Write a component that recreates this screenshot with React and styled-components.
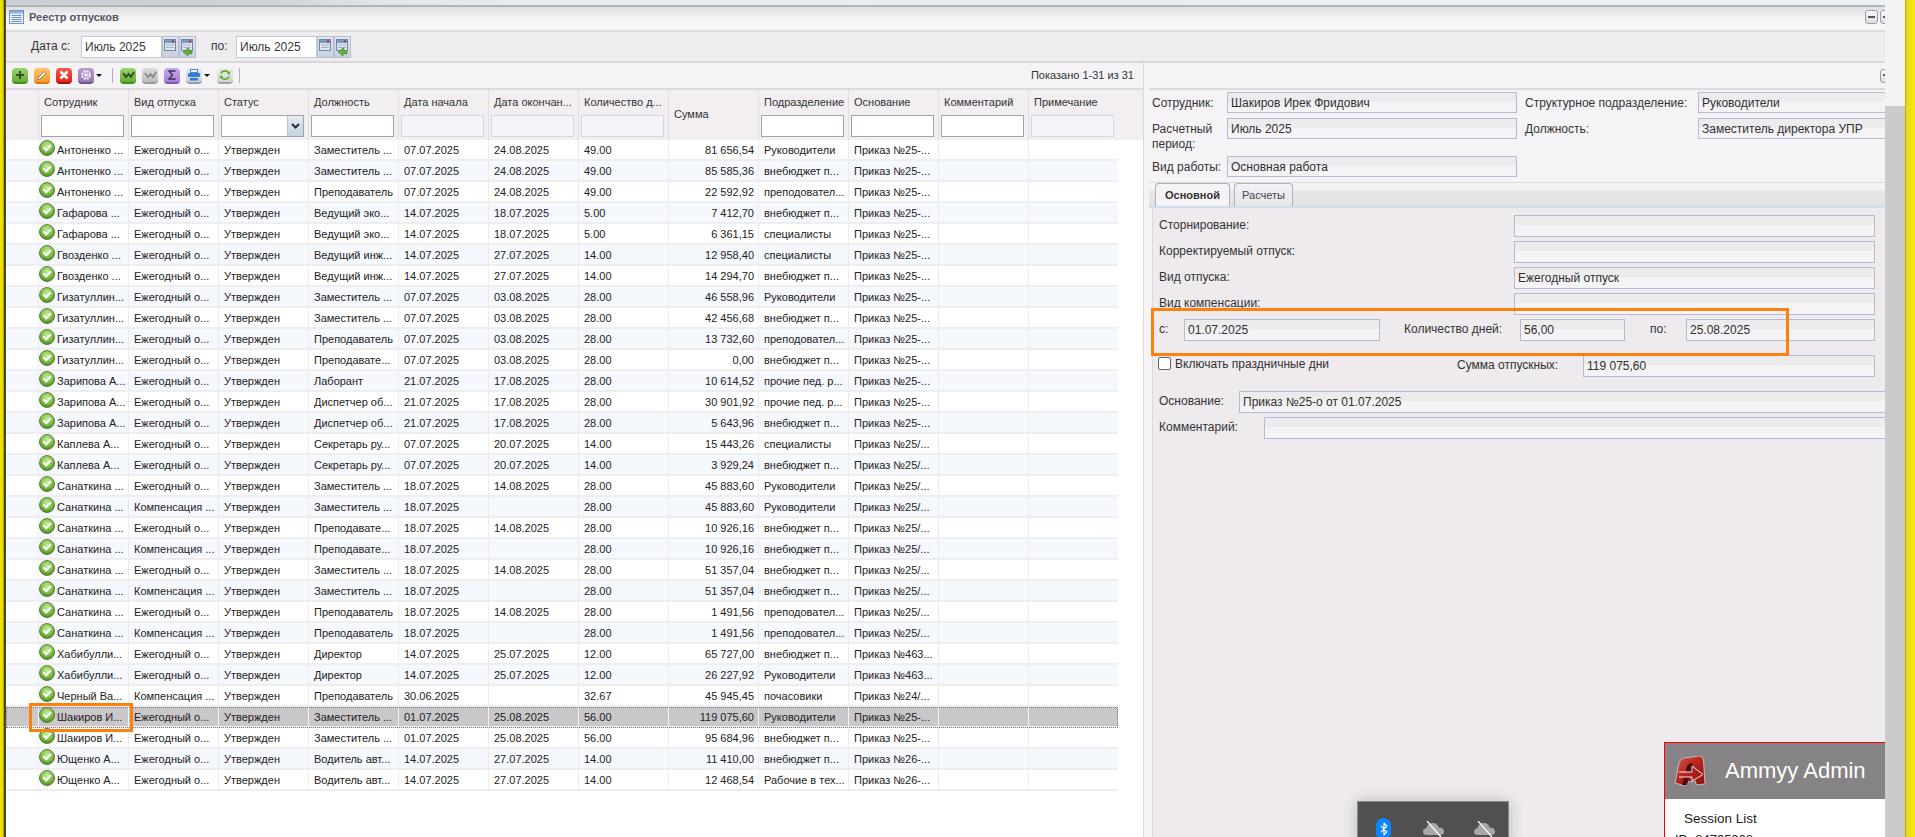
import React from "react";
import styled, { createGlobalStyle } from "styled-components";
import { Bluetooth } from "lucide-react";

const GlobalStyle = createGlobalStyle`
  html, body {
    margin: 0;
    padding: 0;
    height: 837px;
    overflow: hidden;
    background: #fff;
  }
  * { box-sizing: border-box; }
  body {
    font-family: "Liberation Sans", Arial, sans-serif;
    font-size: 11px;
    color: #222;
  }
`;

const Z = "Заместитель ...";
const P = "Преподаватель";
const PT = "Преподавате...";
const VB = "внебюджет п...";
const RK = "Руководители";
const SP = "специалисты";
const PR = "преподовател...";
const PED = "прочие пед. р...";
const E = "Ежегодный о...";
const K = "Компенсация ...";
const N25 = "Приказ №25-...";
const N25S = "Приказ №25/...";
const N463 = "Приказ №463...";
const N26 = "Приказ №26-...";

const rows = [
  ["Антоненко ...", E, Z, "07.07.2025", "24.08.2025", "49.00", "81 656,54", RK, N25],
  ["Антоненко ...", E, Z, "07.07.2025", "24.08.2025", "49.00", "85 585,36", VB, N25],
  ["Антоненко ...", E, P, "07.07.2025", "24.08.2025", "49.00", "22 592,92", PR, N25],
  ["Гафарова ...", E, "Ведущий эко...", "14.07.2025", "18.07.2025", "5.00", "7 412,70", VB, N25],
  ["Гафарова ...", E, "Ведущий эко...", "14.07.2025", "18.07.2025", "5.00", "6 361,15", SP, N25],
  ["Гвозденко ...", E, "Ведущий инж...", "14.07.2025", "27.07.2025", "14.00", "12 958,40", SP, N25],
  ["Гвозденко ...", E, "Ведущий инж...", "14.07.2025", "27.07.2025", "14.00", "14 294,70", VB, N25],
  ["Гизатуллин...", E, Z, "07.07.2025", "03.08.2025", "28.00", "46 558,96", RK, N25],
  ["Гизатуллин...", E, Z, "07.07.2025", "03.08.2025", "28.00", "42 456,68", VB, N25],
  ["Гизатуллин...", E, P, "07.07.2025", "03.08.2025", "28.00", "13 732,60", PR, N25],
  ["Гизатуллин...", E, PT, "07.07.2025", "03.08.2025", "28.00", "0,00", VB, N25],
  ["Зарипова А...", E, "Лаборант", "21.07.2025", "17.08.2025", "28.00", "10 614,52", PED, N25],
  ["Зарипова А...", E, "Диспетчер об...", "21.07.2025", "17.08.2025", "28.00", "30 901,92", PED, N25],
  ["Зарипова А...", E, "Диспетчер об...", "21.07.2025", "17.08.2025", "28.00", "5 643,96", VB, N25],
  ["Каплева А...", E, "Секретарь ру...", "07.07.2025", "20.07.2025", "14.00", "15 443,26", SP, N25S],
  ["Каплева А...", E, "Секретарь ру...", "07.07.2025", "20.07.2025", "14.00", "3 929,24", VB, N25S],
  ["Санаткина ...", E, Z, "18.07.2025", "14.08.2025", "28.00", "45 883,60", RK, N25S],
  ["Санаткина ...", K, Z, "18.07.2025", "", "28.00", "45 883,60", RK, N25S],
  ["Санаткина ...", E, PT, "18.07.2025", "14.08.2025", "28.00", "10 926,16", VB, N25S],
  ["Санаткина ...", K, PT, "18.07.2025", "", "28.00", "10 926,16", VB, N25S],
  ["Санаткина ...", E, Z, "18.07.2025", "14.08.2025", "28.00", "51 357,04", VB, N25S],
  ["Санаткина ...", K, Z, "18.07.2025", "", "28.00", "51 357,04", VB, N25S],
  ["Санаткина ...", E, P, "18.07.2025", "14.08.2025", "28.00", "1 491,56", PR, N25S],
  ["Санаткина ...", K, P, "18.07.2025", "", "28.00", "1 491,56", PR, N25S],
  ["Хабибулли...", E, "Директор", "14.07.2025", "25.07.2025", "12.00", "65 727,00", VB, N463],
  ["Хабибулли...", E, "Директор", "14.07.2025", "25.07.2025", "12.00", "26 227,92", RK, N463],
  ["Черный Ва...", K, P, "30.06.2025", "", "32.67", "45 945,45", "почасовики", "Приказ №24/..."],
  ["Шакиров И...", E, Z, "01.07.2025", "25.08.2025", "56.00", "119 075,60", RK, N25],
  ["Шакиров И...", E, Z, "01.07.2025", "25.08.2025", "56.00", "95 684,96", VB, N25],
  ["Ющенко А...", E, "Водитель авт...", "14.07.2025", "27.07.2025", "14.00", "11 410,00", VB, N26],
  ["Ющенко А...", E, "Водитель авт...", "14.07.2025", "27.07.2025", "14.00", "12 468,54", "Рабочие в тех...", N26],
];

const columns = [
  { title: "Сотрудник", filter: "on" },
  { title: "Вид отпуска", filter: "on" },
  { title: "Статус", filter: "select" },
  { title: "Должность", filter: "on" },
  { title: "Дата начала", filter: "off" },
  { title: "Дата окончан...", filter: "off" },
  { title: "Количество д...", filter: "off" },
  { title: "Сумма", filter: "none" },
  { title: "Подразделение", filter: "on" },
  { title: "Основание", filter: "on" },
  { title: "Комментарий", filter: "on" },
  { title: "Примечание", filter: "off" },
];

const Page = styled.div`
  position: relative;
  display: flex;
  width: 1915px;
  height: 837px;
  overflow: hidden;
`;

const EdgeLeft = styled.div`
  width: 6px;
  background: linear-gradient(90deg, #f0e400 0, #e8dc00 55%, #3a3a20 65%, #55554a 100%);
`;

const EdgeRight = styled.div`
  width: 10px;
  background: linear-gradient(90deg, #8d8a20 0, #e8dc10 12%, #f6ea1a 100%);
`;

const ScrollTrack = styled.div`
  width: 20px;
  background: #cbcbcb;
  &::before {
    content: "";
    display: block;
    height: 106px;
    background: #f3f3f3;
  }
`;

const Window = styled.div`
  width: 1879px;
  display: flex;
  flex-direction: column;
  overflow: hidden;
`;

const TopStrip = styled.div`
  height: 7px;
  flex: none;
  border-bottom: 2px solid #b3b3ba;
  background: linear-gradient(90deg, #c9ced4 0, #cfd3d8 14%, #e2e6ea 20%, #e8ecf2 30%, #eef2f8 100%);
`;

const TitleBar = styled.div`
  height: 25px;
  flex: none;
  display: flex;
  align-items: center;
  gap: 5px;
  padding: 0 0 3px 3px;
  background: linear-gradient(180deg, #dedede 0, #f1f1f1 40%, #f8f7f7 60%, #f8f7f7 100%);
  border-bottom: 2px solid #dcdcdc;
`;

const TitleText = styled.span`
  font-weight: bold;
  font-size: 11px;
  color: #565664;
`;

const PanelButtons = styled.div`
  margin-left: auto;
  display: flex;
  gap: 2px;
  margin-right: -8px;
`;

const SmallButton = styled.span`
  display: flex;
  align-items: center;
  justify-content: center;
  width: 13px;
  height: 14px;
  border: 1px solid #9b9ba6;
  border-radius: 3px;
  background: linear-gradient(180deg, #fbfbfb, #dcdce2);
  &::after {
    content: "";
    width: 7px;
    height: 2px;
    background: #555;
  }
`;

const FilterBar = styled.div`
  height: 31px;
  flex: none;
  display: flex;
  align-items: center;
  padding-left: 25px;
  background: #efecef;
  border-bottom: 2px solid #d9d7d9;
  font-size: 12px;
`;

const FilterLabel = styled.label`
  width: ${(p) => p.$w}px;
  flex: none;
  padding-bottom: 1px;
  color: #333;
`;

const MonthInput = styled.div`
  width: 81px;
  height: 22px;
  line-height: 21px;
  padding-left: 3px;
  background: #fff;
  border: 1px solid #c2c8d8;
  color: #3a3a3a;
`;

const TriggerButton = styled.span`
  width: 17px;
  height: 22px;
  display: flex;
  align-items: center;
  justify-content: center;
  background: linear-gradient(180deg, #e2e7f0, #c7d0de);
  border: 1px solid #b8c0d0;
  margin-right: ${(p) => p.$mr || 0}px;
`;

const Split = styled.div`
  flex: 1;
  display: flex;
  min-height: 0;
`;

const GridPanel = styled.section`
  width: 1137px;
  flex: none;
  display: flex;
  flex-direction: column;
  background: #fff;
`;

const Toolbar = styled.div`
  height: 27px;
  flex: none;
  display: flex;
  align-items: center;
  padding-left: 6px;
  background: #f6f3f7;
  border-bottom: 2px solid #dcd9dc;
`;

const ToolIcon = styled.span`
  width: 16px;
  height: 16px;
  flex: none;
  display: flex;
  align-items: center;
  justify-content: center;
  border-radius: 4px;
  margin-right: ${(p) => p.$mr ?? 6}px;
  background: linear-gradient(180deg, ${(p) => p.$top}, ${(p) => p.$bottom});
  border-bottom: 2px solid ${(p) => p.$edge};
`;

const Caret = styled.span`
  width: 0;
  height: 0;
  flex: none;
  margin: 0 ${(p) => p.$mr ?? 10}px 0 2px;
  border-left: 3px solid transparent;
  border-right: 3px solid transparent;
  border-top: 3px solid #111;
`;

const ToolSep = styled.span`
  width: 1px;
  height: 15px;
  flex: none;
  background: #aab4b8;
  margin-right: 7px;
`;

const ShownInfo = styled.span`
  margin-left: auto;
  margin-right: 9px;
  font-size: 11px;
  color: #333;
  padding-bottom: 2px;
`;

const GridHead = styled.div`
  height: 50px;
  flex: none;
  display: grid;
  grid-template-columns: 32px repeat(12, 90px);
  background: #f2eef2;
`;

const HeadCell = styled.div`
  position: relative;
  border-left: ${(p) => (p.$blank ? "none" : "1px solid #e2dee2")};
  padding: 6px 0 0 5px;
  color: #333;
  white-space: nowrap;
  ${(p) => p.$center && "display: flex; align-items: center; padding-top: 0; padding-bottom: 2px;"}
`;

const FilterBox = styled.div`
  position: relative;
  width: 83px;
  height: 22px;
  margin: 7px 0 0 -3px;
  background: ${(p) => (p.$off ? "#f4f5fb" : "#fff")};
  border: 1px solid ${(p) => (p.$off ? "#d4d6e0" : "#a3a3a8")};
`;

const SelectArrow = styled.span`
  position: absolute;
  right: 0;
  top: 0;
  bottom: 0;
  width: 16px;
  display: flex;
  align-items: center;
  justify-content: center;
  background: linear-gradient(180deg, #e4eaf0, #c3d2de);
  border-left: 1px solid #b8c4d0;
`;

const GridRow = styled.div`
  height: 21px;
  flex: none;
  width: 1112px;
  display: grid;
  grid-template-columns: 32px repeat(12, 90px);
  background: ${(p) => (p.$selected ? "#c9c7ca" : p.$alt ? "#f5f8fd" : "#fff")};
  border-bottom: 2px solid #eeeeee;
  ${(p) => p.$selected && "outline: 1px dotted #777; outline-offset: -1px;"}
`;

const Cell = styled.div`
  display: flex;
  align-items: center;
  justify-content: ${(p) => (p.$right ? "flex-end" : "flex-start")};
  padding: ${(p) => (p.$right ? "0 4px 0 0" : "0 0 0 5px")};
  border-left: 1px solid ${(p) => (p.$selected ? "#f2f2f2" : "#ececec")};
  white-space: nowrap;
  overflow: hidden;
`;

const NameCell = styled(Cell)`
  padding-left: 0;
  gap: 2px;
  overflow: visible;
`;

const BlankCell = styled.div``;

const Splitter = styled.div`
  width: 9px;
  flex: none;
  background: #f5f3f5;
  border-left: 1px solid #dcd8dc;
  border-right: 1px solid #dcd8dc;
`;

const DetailPanel = styled.section`
  flex: 1;
  min-width: 0;
  display: flex;
  flex-direction: column;
  overflow: hidden;
  background: #f6f3f7;
  margin-left: -3px;
  font-size: 12px;
`;

const DetailToolbar = styled.div`
  height: 27px;
  flex: none;
  display: flex;
  align-items: center;
  justify-content: flex-end;
  border-bottom: 2px solid #dcd9dc;
`;

const ClippedButton = styled(SmallButton)`
  margin-right: -8px;
  padding-bottom: 2px;
`;

const HeadForm = styled.div`
  flex: none;
  display: grid;
  grid-template-columns: 75px 290px 181px 200px;
  grid-template-rows: 21px 33px 21px;
  row-gap: 5px;
  padding: 2px 0 5px 3px;
`;

const HeadLabel = styled.div`
  line-height: 14.5px;
  padding-top: 4px;
  color: #333;
  margin-left: ${(p) => p.$ml || 0}px;
`;

const Field = styled.div`
  height: ${(p) => p.$h || 22}px;
  flex: ${(p) => (p.$w ? "none" : "1")};
  width: ${(p) => (p.$w ? `${p.$w}px` : "auto")};
  line-height: ${(p) => (p.$h || 22) - 1}px;
  padding-left: 3px;
  border: 1px solid #b3bcd4;
  white-space: nowrap;
  color: #2f2f2f;
  background: linear-gradient(180deg, #ececec 0, #ececec 45%, #f6f3f7 45%, #f6f3f7 100%);
`;

const TabStrip = styled.div`
  height: 26px;
  flex: none;
  display: flex;
  align-items: flex-end;
  gap: 4px;
  padding-left: 6px;
  border-top: 1px solid #dcdcdc;
  border-bottom: 2px solid #cfdcec;
  background: linear-gradient(180deg, #f5f3f5 0, #f5f3f5 30%, #e8e8e8 30%, #e2e2e2 100%);
`;

const Tab = styled.div`
  width: ${(p) => p.$w}px;
  height: 23px;
  display: flex;
  align-items: center;
  justify-content: center;
  border: 1px solid #aab0bc;
  border-bottom: none;
  border-radius: 4px 4px 0 0;
  font-size: 11px;
  font-weight: ${(p) => (p.$active ? "bold" : "normal")};
  color: ${(p) => (p.$active ? "#333" : "#445")};
  background: ${(p) => (p.$active ? "#f6f3f7" : "linear-gradient(180deg, #f4f2f4, #e6e6e6)")};
`;

const TabBody = styled.div`
  flex: 1;
  margin-left: 3px;
  padding: 7px 0 0 6px;
  background: #eeeaee;
  border-left: 1px solid #dcd8dc;
  overflow: hidden;
`;

const FormRow = styled.div`
  display: flex;
  align-items: flex-start;
  height: 22px;
  margin-bottom: ${(p) => p.$mb ?? 4}px;
  padding-right: 10px;
`;

const RowLabel = styled.div`
  width: ${(p) => p.$w}px;
  flex: none;
  line-height: 21px;
  white-space: nowrap;
  margin-left: ${(p) => p.$ml || 0}px;
  color: #333;
`;

const CheckLabel = styled.label`
  width: 299px;
  flex: none;
  display: flex;
  align-items: center;
  gap: 4px;
  height: 15px;
  margin-top: 1px;
  margin-left: -1px;
  color: #333;
`;

const CheckBox = styled.span`
  width: 13px;
  height: 13px;
  flex: none;
  border: 1px solid #666;
  border-radius: 2px;
  background: #fff;
`;

const Highlight = styled.div`
  position: absolute;
  left: ${(p) => p.$x}px;
  top: ${(p) => p.$y}px;
  width: ${(p) => p.$w}px;
  height: ${(p) => p.$h}px;
  border: 3px solid #ff7f0e;
  pointer-events: none;
`;

const TrayPopup = styled.div`
  position: absolute;
  left: 1357px;
  top: 801px;
  width: 152px;
  height: 46px;
  display: flex;
  align-items: flex-start;
  padding: 16px 0 0 18px;
  background: #505050;
  border: 1px solid #8c8c8c;
  box-shadow: 0 0 14px rgba(0, 0, 0, 0.22);
`;

const BluetoothPill = styled.span`
  width: 15px;
  height: 22px;
  flex: none;
  display: flex;
  align-items: center;
  justify-content: center;
  border-radius: 8px;
  background: #0a84ff;
  color: #fff;
  margin-right: 32px;
`;

const TrayCloud = styled.svg`
  width: 21px;
  height: 16px;
  flex: none;
  margin-top: 3px;
  margin-right: 30px;
`;

const AmmyyWindow = styled.div`
  position: absolute;
  left: 1664px;
  top: 742px;
  width: 221px;
  height: 95px;
  background: #fff;
  border-left: 1px solid #f00;
  border-top: 1px solid #f00;
  overflow: hidden;
`;

const AmmyyHead = styled.div`
  height: 56px;
  display: flex;
  align-items: center;
  gap: 19px;
  padding-left: 9px;
  background: #868386;
  color: #fff;
  font-size: 22px;
`;

const SessionTitle = styled.div`
  padding: 12px 0 0 19px;
  font-size: 13.5px;
  line-height: 16px;
  color: #222;
`;

const SessionId = styled.div`
  padding: 5px 0 0 10px;
  font-size: 13px;
  line-height: 15px;
  color: #222;
`;

const StatusSvg = styled.svg`
  flex: none;
  margin-top: -4px;
`;

const PlainSvg = styled.svg`
  flex: none;
`;

function StatusIcon() {
  return (
    <StatusSvg width="16" height="16" viewBox="0 0 16 16">
      <defs>
        <radialGradient id="okFill" cx="50%" cy="35%" r="65%">
          <stop offset="0" stopColor="#c8ec9a" />
          <stop offset="0.6" stopColor="#7fbf45" />
          <stop offset="1" stopColor="#4a8526" />
        </radialGradient>
      </defs>
      <circle cx="8" cy="8" r="7.5" fill="url(#okFill)" stroke="#55783f" strokeWidth="0.9" />
      <path d="M4.400 7.300 7.200 10.200 11.800 5.200" fill="none" stroke="#fff" strokeWidth="2.200" />
    </StatusSvg>
  );
}

function CalendarIcon({ back }) {
  return (
    <svg width="15" height="18" viewBox="0 0 15 18">
      <rect x="1.5" y="1.5" width="11" height="11" fill="#dfe6f2" stroke="#6e86a8" />
      <rect x="2" y="2" width="10" height="3" fill="#7f98bc" />
      <circle cx="10" cy="3.5" r="1.2" fill="#c0392b" />
      <path d="M3 7h8M3 9.5h8" stroke="#9fb2cc" />
      {back && <path d="M9 10v3h3v3H8v2L3 14l5-4z" fill="#6cae3a" stroke="#3f7f1a" strokeWidth="0.5" />}
    </svg>
  );
}

function Glyph({ children }) {
  return (
    <svg width="14" height="14" viewBox="0 0 14 14">
      {children}
    </svg>
  );
}

function TitleIcon() {
  return (
    <PlainSvg width="15" height="14" viewBox="0 0 15 14">
      <rect x="0.5" y="0.5" width="14" height="13" fill="#eaf1fb" stroke="#6e90c4" />
      <rect x="1" y="1" width="13" height="2.5" fill="#8fb2e2" />
      <path d="M2.5 5.5h10M2.5 7.5h10M2.5 9.5h10M2.5 11.5h10" stroke="#6f8fbd" />
    </PlainSvg>
  );
}

function AmmyyLogo() {
  return (
    <PlainSvg width="32" height="30" viewBox="0 0 32 30">
      <defs>
        <linearGradient id="ammyyRed" x1="0" y1="0" x2="1" y2="1">
          <stop offset="0" stopColor="#d0554c" />
          <stop offset="0.55" stopColor="#b3201b" />
          <stop offset="1" stopColor="#8a110e" />
        </linearGradient>
      </defs>
      <path
        d="M1 27 5 7Q6 3 10 2L25 0Q29 0 29.500 4L31 28 22 29 21.500 25 14 26 13 29 8 29Z"
        fill="url(#ammyyRed)"
        stroke="#c8b8b8"
      />
      <path d="M12 16Q12 8 17 7 19 7 19 10L19 16Z" fill="#4a0d0d" />
      <path d="M10 21 15 21 13 29 8 29Z" fill="#4a0d0d" />
      <path d="M5 16 18 16 18 10 29 18.500 18 25 18 21 5 21" fill="none" stroke="#f4e6e6" strokeWidth="1" />
    </PlainSvg>
  );
}

function CloudOff() {
  return (
    <TrayCloud viewBox="0 0 21 16">
      <path
        d="M4 14Q0 14 0 10.5 0 7.5 3.5 7 4.5 2 10 2 14.500 2 15.500 6.500 21 6.500 21 10.500 21 14 17 14Z"
        fill="#a8a8a8"
      />
      <path d="M4 0 18 16" stroke="#f4f4f4" strokeWidth="1.4" />
    </TrayCloud>
  );
}

function DataRow({ row, index }) {
  const selected = index === 27;
  const cells = [row[1], "Утвержден", row[2], row[3], row[4], row[5]];
  return (
    <GridRow $alt={index % 2 === 1} $selected={selected}>
      <BlankCell />
      <NameCell $selected={selected}>
        <StatusIcon />
        {row[0]}
      </NameCell>
      {cells.map((text, i) => (
        <Cell key={i} $selected={selected}>
          {text}
        </Cell>
      ))}
      <Cell $right $selected={selected}>
        {row[6]}
      </Cell>
      <Cell $selected={selected}>{row[7]}</Cell>
      <Cell $selected={selected}>{row[8]}</Cell>
      <Cell $selected={selected} />
      <Cell $selected={selected} />
    </GridRow>
  );
}

export default function App() {
  return (
    <Page>
      <GlobalStyle />
      <EdgeLeft />
      <Window>
        <TopStrip />
        <TitleBar>
          <TitleIcon />
          <TitleText>Реестр отпусков</TitleText>
          <PanelButtons>
            <SmallButton />
            <SmallButton />
          </PanelButtons>
        </TitleBar>
        <FilterBar>
          <FilterLabel $w={50}>Дата с:</FilterLabel>
          <MonthInput>Июль 2025</MonthInput>
          <TriggerButton>
            <CalendarIcon />
          </TriggerButton>
          <TriggerButton $mr={15}>
            <CalendarIcon back />
          </TriggerButton>
          <FilterLabel $w={25}>по:</FilterLabel>
          <MonthInput>Июль 2025</MonthInput>
          <TriggerButton>
            <CalendarIcon />
          </TriggerButton>
          <TriggerButton>
            <CalendarIcon back />
          </TriggerButton>
        </FilterBar>
        <Split>
          <GridPanel>
            <Toolbar>
              <ToolIcon $top="#9ad56a" $bottom="#66ad35" $edge="#3f8f12">
                <Glyph>
                  <path d="M7 3v8M3 7h8" stroke="#3a4a30" strokeWidth="2" />
                </Glyph>
              </ToolIcon>
              <ToolIcon $top="#fcc66f" $bottom="#f59b2b" $edge="#d97a06">
                <Glyph>
                  <path d="M3 10 9 3.500 11 5.500 4.500 11.500 3 11.500Z" fill="#fff" stroke="#7a5a30" strokeWidth="0.8" />
                </Glyph>
              </ToolIcon>
              <ToolIcon $top="#f45a4a" $bottom="#e2231a" $edge="#a81010">
                <Glyph>
                  <path d="M3.500 3.500 10.500 10.500M10.500 3.500 3.500 10.500" stroke="#fff" strokeWidth="2.6" />
                </Glyph>
              </ToolIcon>
              <ToolIcon $top="#b99ccf" $bottom="#9a78b4" $edge="#6f4f92" $mr={0}>
                <Glyph>
                  <circle cx="7" cy="7" r="3.800" fill="none" stroke="#fff" strokeWidth="2" strokeDasharray="2 1" />
                  <circle cx="7" cy="7" r="1.800" fill="#fff" />
                </Glyph>
              </ToolIcon>
              <Caret />
              <ToolSep />
              <ToolIcon $top="#9ad56a" $bottom="#66ad35" $edge="#3f8f12">
                <Glyph>
                  <path d="M2 5 5 9 7.500 6 10 9 13 4" fill="none" stroke="#2f4a2a" strokeWidth="1.800" />
                </Glyph>
              </ToolIcon>
              <ToolIcon $top="#dcdcdc" $bottom="#bdbdbd" $edge="#9a9a9a">
                <Glyph>
                  <path d="M2 5 5 9 7.500 6 10 9 13 4" fill="none" stroke="#8a8a8a" strokeWidth="1.800" />
                </Glyph>
              </ToolIcon>
              <ToolIcon $top="#c6a8ec" $bottom="#a582d6" $edge="#7a55b2">
                <Glyph>
                  <path d="M10.500 3H4L7.500 7 4 11h6.500" fill="none" stroke="#3a3050" strokeWidth="1.300" />
                </Glyph>
              </ToolIcon>
              <ToolIcon $top="#e8e8ec" $bottom="#cfd0d6" $edge="#9a9aa4" $mr={0}>
                <Glyph>
                  <rect x="3.500" y="1.500" width="7" height="3" fill="#fff" stroke="#3f8ae0" />
                  <rect x="1" y="5" width="12" height="4" rx="1" fill="#2f7fd8" />
                  <rect x="3" y="10" width="8" height="2.500" fill="#2f7fd8" />
                </Glyph>
              </ToolIcon>
              <Caret $mr={7} />
              <ToolIcon $top="#eeeeee" $bottom="#d2d2d2" $edge="#a2a2a2" $mr={6}>
                <Glyph>
                  <path d="M11 5.500A4.300 4.300 0 0 0 3 5.500M3 8.500A4.300 4.300 0 0 0 11 8.500" fill="none" stroke="#5eb02a" strokeWidth="1.700" />
                  <path d="M12.500 3.500 11.500 7 8.800 5.200ZM1.500 10.500 2.500 7 5.200 8.800Z" fill="#5eb02a" />
                </Glyph>
              </ToolIcon>
              <ToolSep />
              <ShownInfo>Показано 1-31 из 31</ShownInfo>
            </Toolbar>
            <GridHead>
              <HeadCell $blank />
              {columns.map((col) => (
                <HeadCell key={col.title} $center={col.filter === "none"}>
                  {col.title}
                  {col.filter !== "none" && (
                    <FilterBox $off={col.filter === "off"}>
                      {col.filter === "select" && (
                        <SelectArrow>
                          <svg width="9" height="6" viewBox="0 0 9 6">
                            <path d="M1 1 4.500 4.500 8 1" fill="none" stroke="#1f2f3f" strokeWidth="2" />
                          </svg>
                        </SelectArrow>
                      )}
                    </FilterBox>
                  )}
                </HeadCell>
              ))}
            </GridHead>
            {rows.map((row, index) => (
              <DataRow key={index} row={row} index={index} />
            ))}
          </GridPanel>
          <Splitter />
          <DetailPanel>
            <DetailToolbar>
              <ClippedButton />
            </DetailToolbar>
            <HeadForm>
              <HeadLabel>Сотрудник:</HeadLabel>
              <Field $h={21}>Шакиров Ирек Фридович</Field>
              <HeadLabel $ml={8}>Структурное подразделение:</HeadLabel>
              <Field $h={21} $w={200}>Руководители</Field>
              <HeadLabel>
                Расчетный
                <br />
                период:
              </HeadLabel>
              <Field $h={21}>Июль 2025</Field>
              <HeadLabel $ml={8}>Должность:</HeadLabel>
              <Field $h={21} $w={200}>Заместитель директора УПР</Field>
              <HeadLabel>Вид работы:</HeadLabel>
              <Field $h={21}>Основная работа</Field>
            </HeadForm>
            <TabStrip>
              <Tab $active $w={75}>Основной</Tab>
              <Tab $w={59}>Расчеты</Tab>
            </TabStrip>
            <TabBody>
              <FormRow>
                <RowLabel $w={355}>Сторнирование:</RowLabel>
                <Field />
              </FormRow>
              <FormRow>
                <RowLabel $w={355}>Корректируемый отпуск:</RowLabel>
                <Field />
              </FormRow>
              <FormRow>
                <RowLabel $w={355}>Вид отпуска:</RowLabel>
                <Field>Ежегодный отпуск</Field>
              </FormRow>
              <FormRow>
                <RowLabel $w={355}>Вид компенсации:</RowLabel>
                <Field />
              </FormRow>
              <FormRow $mb={14}>
                <RowLabel $w={25}>с:</RowLabel>
                <Field $w={196}>01.07.2025</Field>
                <RowLabel $w={116} $ml={24}>Количество дней:</RowLabel>
                <Field $w={105}>56,00</Field>
                <RowLabel $w={36} $ml={25}>по:</RowLabel>
                <Field>25.08.2025</Field>
              </FormRow>
              <FormRow $mb={14}>
                <CheckLabel>
                  <CheckBox />
                  Включать праздничные дни
                </CheckLabel>
                <RowLabel $w={126}>Сумма отпускных:</RowLabel>
                <Field>119 075,60</Field>
              </FormRow>
              <FormRow>
                <RowLabel $w={80}>Основание:</RowLabel>
                <Field $w={700}>Приказ №25-о от 01.07.2025</Field>
              </FormRow>
              <FormRow>
                <RowLabel $w={105}>Комментарий:</RowLabel>
                <Field $w={700} />
              </FormRow>
            </TabBody>
          </DetailPanel>
        </Split>
      </Window>
      <ScrollTrack />
      <EdgeRight />

      <Highlight $x={29} $y={703} $w={104} $h={29} />
      <Highlight $x={1151} $y={308} $w={638} $h={48} />

      <TrayPopup>
        <BluetoothPill>
          <Bluetooth size={14} strokeWidth={2} />
        </BluetoothPill>
        <CloudOff />
        <CloudOff />
      </TrayPopup>

      <AmmyyWindow>
        <AmmyyHead>
          <AmmyyLogo />
          Ammyy Admin
        </AmmyyHead>
        <SessionTitle>Session List</SessionTitle>
        <SessionId>ID: 84795268</SessionId>
      </AmmyyWindow>
    </Page>
  );
}
